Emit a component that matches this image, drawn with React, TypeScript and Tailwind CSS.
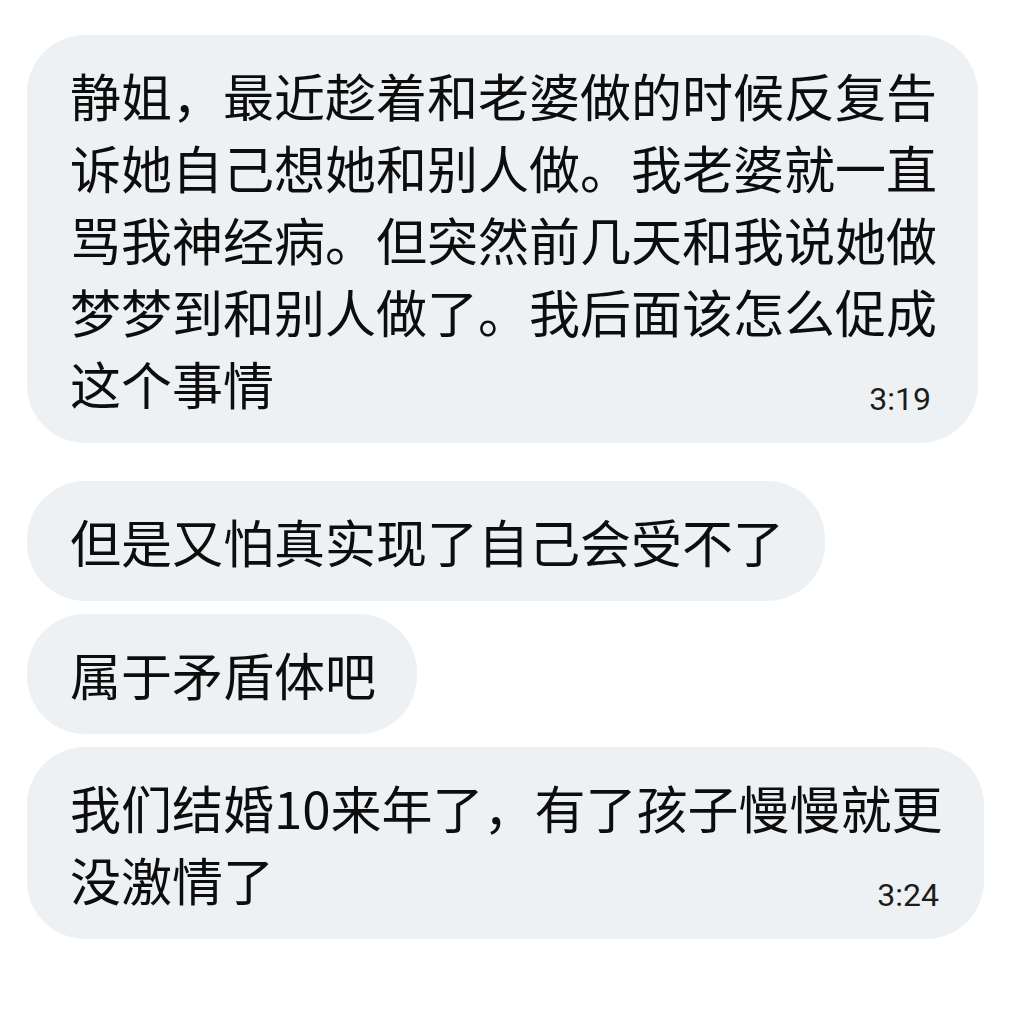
type Msg = {
  text: string;
  time?: string;
  width?: string;
  gap: string;
};

const messages: Msg[] = [
  {
    text: "静姐，最近趁着和老婆做的时候反复告诉她自己想她和别人做。我老婆就一直骂我神经病。但突然前几天和我说她做梦梦到和别人做了。我后面该怎么促成这个事情",
    time: "3:19",
    width: "w-[951px] pr-[40px]",
    gap: "mb-[38px]",
  },
  { text: "但是又怕真实现了自己会受不了", gap: "mb-[13px]" },
  { text: "属于矛盾体吧", gap: "mb-[13px]" },
  {
    text: "我们结婚10来年了，有了孩子慢慢就更没激情了",
    time: "3:24",
    width: "w-[957px] pr-[38px]",
    gap: "",
  },
];

function Bubble({ msg }: { msg: Msg }) {
  return (
    <div
      className={`${msg.width ?? "pr-[41px]"} ${msg.gap} bg-[#eef1f3] rounded-[58px] pl-[43px] py-[24px] text-[51px] leading-[72px] text-[#0d0d0d]`}
    >
      {msg.text}
      {msg.time && (
        <span className="float-right ml-4 mr-[7px] mt-[36px] text-[32px] leading-[32px] text-[#1c1c1c] font-['Roboto',sans-serif]">
          {msg.time}
        </span>
      )}
    </div>
  );
}

export default function App() {
  return (
    <div className="min-h-screen h-[1032px] bg-white font-['Noto_Sans_CJK_SC',sans-serif]">
      <div className="flex flex-col items-start px-[27px] pt-[35px]">
        {messages.map((m, i) => (
          <Bubble key={i} msg={m} />
        ))}
      </div>
    </div>
  );
}
